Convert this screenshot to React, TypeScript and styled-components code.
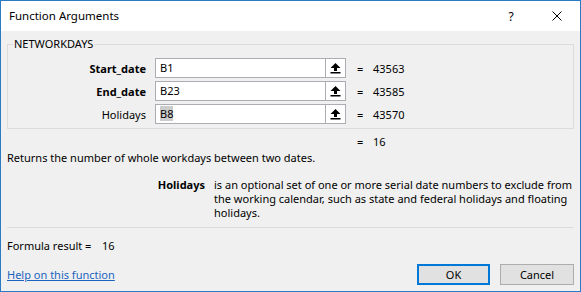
import React from "react";
import styled, { createGlobalStyle } from "styled-components";

const GlobalStyle = createGlobalStyle`
  html, body {
    margin: 0;
    padding: 0;
    background: #ffffff;
  }
  body {
    font-family: "Noto Sans", "Open Sans", sans-serif;
    font-size: 11px;
    color: #000;
  }
`;

const Window = styled.div`
  box-sizing: border-box;
  width: 581px;
  height: 292px;
  border: 1px solid #2b7bc4;
  background: #f0f0f0;
  display: flex;
  flex-direction: column;
`;

const TitleBar = styled.div`
  height: 30px;
  background: #ffffff;
  display: flex;
  align-items: center;
  padding-left: 8px;
  flex-shrink: 0;
`;

const Title = styled.div`
  flex: 1;
  font-size: 11.5px;
  line-height: 16px;
`;

const TitleButton = styled.div<{ $w: number }>`
  width: ${(p) => p.$w}px;
  height: 30px;
  display: flex;
  align-items: center;
  justify-content: center;
  font-size: 12px;
`;

const Body = styled.div`
  padding: 0 6px;
  display: flex;
  flex-direction: column;
`;

const Group = styled.fieldset`
  margin: 5px 0 0 0;
  padding: 6px 0 4px 0;
  border: 1px solid #dcdcdc;
  min-width: 0;
`;

const Legend = styled.legend`
  margin-left: 5px;
  padding: 0 1px;
  line-height: 16px;
  height: 16px;
`;

const Rows = styled.div`
  display: flex;
  flex-direction: column;
  gap: 3px;
`;

const Row = styled.div`
  display: flex;
  align-items: center;
  height: 20px;
`;

const Label = styled.div<{ $bold?: boolean }>`
  width: 138px;
  text-align: right;
  font-weight: ${(p) => (p.$bold ? 700 : 400)};
`;

const Field = styled.div`
  box-sizing: border-box;
  margin-left: 9px;
  width: 191px;
  height: 20px;
  display: flex;
  border: 1px solid #abadb3;
  background: #ffffff;
`;

const FieldText = styled.div`
  flex: 1;
  padding-left: 4px;
  line-height: 18px;
`;

const Selected = styled.span`
  background: #cccccc;
`;

const RefButton = styled.div`
  box-sizing: border-box;
  width: 20px;
  height: 18px;
  border-left: 1px solid #abadb3;
  display: flex;
  align-items: center;
  justify-content: center;
  background: #ffffff;
`;

const Eq = styled.div`
  margin-left: 11px;
  width: 16px;
`;

const Value = styled.div``;

const ResultRow = styled.div`
  margin-top: 5px;
  padding-left: 339px;
  display: flex;
  line-height: 16px;
`;

const Summary = styled.div`
  line-height: 16px;
`;

const ArgHelp = styled.div`
  margin-top: 12px;
  display: flex;
  line-height: 14px;
`;

const ArgName = styled.div`
  width: 198px;
  text-align: right;
  font-weight: 700;
  flex-shrink: 0;
`;

const ArgText = styled.div`
  margin-left: 9px;
  width: 362px;
`;

const Divider = styled.div`
  margin-top: 7px;
  height: 1px;
  background: #dcdcdc;
`;

const FormulaResult = styled.div`
  margin-top: 10px;
  line-height: 16px;
  display: flex;
`;

const FormulaLabel = styled.span`
  width: 95px;
  flex-shrink: 0;
`;

const Footer = styled.div`
  margin-top: 10px;
  display: flex;
  align-items: center;
  gap: 10px;
`;

const HelpLink = styled.a`
  flex: 1;
  color: #1a64c0;
  text-decoration: underline;
  cursor: pointer;
`;

const Button = styled.button<{ $primary?: boolean }>`
  box-sizing: border-box;
  width: ${(p) => (p.$primary ? 73 : 74)}px;
  height: 21px;
  font-family: inherit;
  font-size: 11px;
  color: #000;
  background: #e1e1e1;
  border: ${(p) => (p.$primary ? "2px solid #0078d7" : "1px solid #adadad")};
  padding: 0;
`;

const UpArrow = () => (
  <svg width="11" height="11" viewBox="0 0 11 11">
    <polygon points="5.5,0 10.5,5 7,5 7,8 4,8 4,5 0.5,5" fill="#000" />
    <rect x="0.5" y="9" width="10" height="1.5" fill="#000" />
  </svg>
);

const CloseIcon = () => (
  <svg width="10" height="10" viewBox="0 0 10 10">
    <path d="M0.5 0.5 L9.5 9.5 M9.5 0.5 L0.5 9.5" stroke="#000" strokeWidth="1" />
  </svg>
);

const args = [
  { name: "Start_date", value: "B1", result: "43563", bold: true },
  { name: "End_date", value: "B23", result: "43585", bold: true },
  { name: "Holidays", value: "B8", result: "43570", bold: false, selected: true },
];

const App = () => (
  <>
    <GlobalStyle />
    <Window>
      <TitleBar>
        <Title>Function Arguments</Title>
        <TitleButton $w={46}>?</TitleButton>
        <TitleButton $w={46}>
          <CloseIcon />
        </TitleButton>
      </TitleBar>
      <Body>
        <Group>
          <Legend>NETWORKDAYS</Legend>
          <Rows>
            {args.map((a) => (
              <Row key={a.name}>
                <Label $bold={a.bold}>{a.name}</Label>
                <Field>
                  <FieldText>{a.selected ? <Selected>{a.value}</Selected> : a.value}</FieldText>
                  <RefButton>
                    <UpArrow />
                  </RefButton>
                </Field>
                <Eq>=</Eq>
                <Value>{a.result}</Value>
              </Row>
            ))}
          </Rows>
        </Group>
        <ResultRow>
          <Eq>=</Eq>
          <Value>16</Value>
        </ResultRow>
        <Summary>Returns the number of whole workdays between two dates.</Summary>
        <ArgHelp>
          <ArgName>Holidays</ArgName>
          <ArgText>
            is an optional set of one or more serial date numbers to exclude from the working
            calendar, such as state and federal holidays and floating holidays.
          </ArgText>
        </ArgHelp>
        <Divider />
        <FormulaResult>
          <FormulaLabel>Formula result =</FormulaLabel>
          <span>16</span>
        </FormulaResult>
        <Footer>
          <HelpLink>Help on this function</HelpLink>
          <Button $primary>OK</Button>
          <Button>Cancel</Button>
        </Footer>
      </Body>
    </Window>
  </>
);

export default App;
